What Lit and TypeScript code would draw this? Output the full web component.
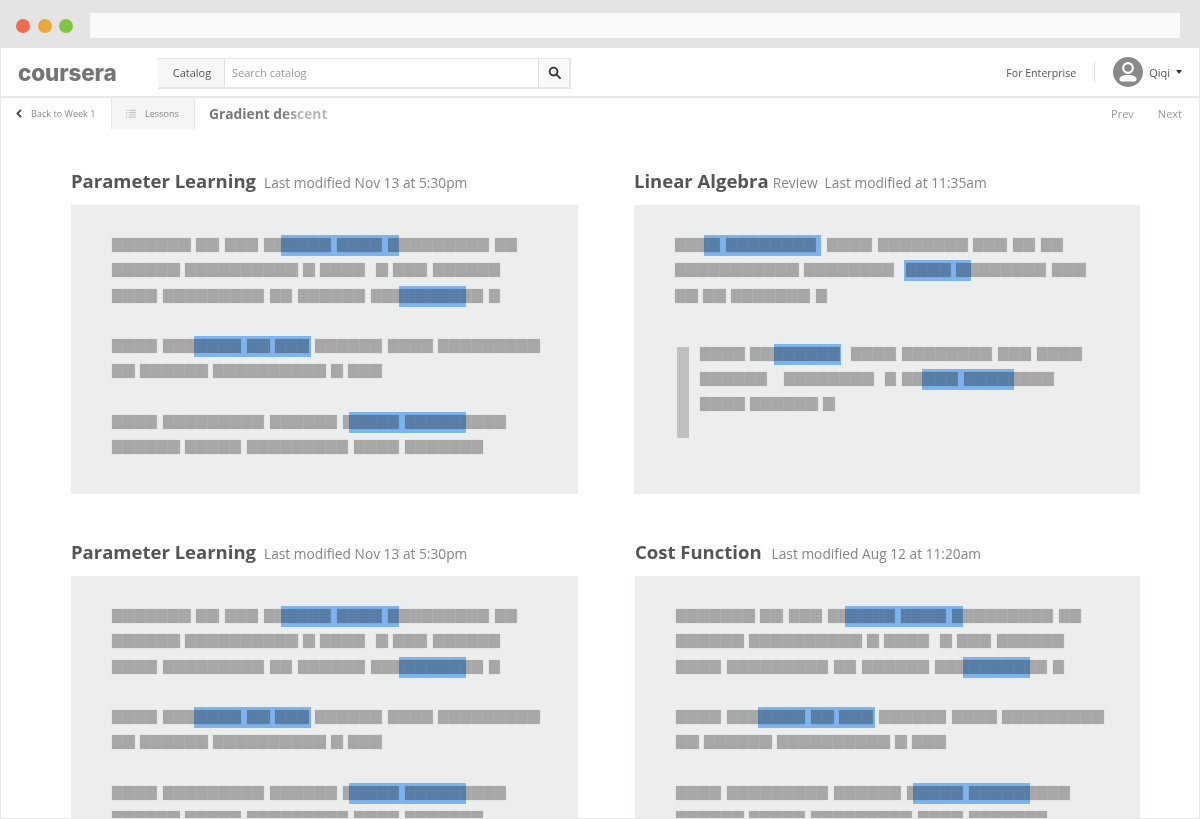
import { LitElement, html, css, svg } from "lit";
import { customElement } from "lit/decorators.js";

type Line = { w: number[]; h?: [number, number] };
const CELL = 11.25;

const para1: Line[][] = [
  [
    { w: [7, 2, 3, 6, 4, 9, 2], h: [169, 287] },
    { w: [6, 10, 1, 4, 0, 1, 3, 6] },
    { w: [4, 9, 2, 6, 10, 1], h: [287, 354] },
  ],
  [
    { w: [4, 7, 2, 3, 6, 4, 9], h: [82, 199] },
    { w: [2, 6, 10, 1, 3] },
  ],
  [
    { w: [4, 9, 6, 5, 9], h: [237, 354] },
    { w: [6, 5, 9, 4, 7] },
  ],
];

const para2: Line[][] = [
  [
    { w: [4, 8, 0, 4, 8, 3, 2, 2], h: [28.5, 146] },
    { w: [11, 8, 0, 4, 8, 3], h: [228.5, 296] },
    { w: [2, 2, 7, 1] },
  ],
];

const quote: Line[] = [
  { w: [4, 8, 0, 4, 8, 3, 4], h: [74, 141] },
  { w: [6, 0, 0, 8, 0, 1, 5, 8], h: [222, 314.5] },
  { w: [4, 6, 1] },
];

@customElement("app-root")
export class AppRoot extends LitElement {
  static styles = css`
    :host {
      display: block;
      height: 819px;
      overflow: hidden;
      font-family: "Open Sans", sans-serif;
      background: #fff;
    }
    .chrome {
      height: 48px;
      background: #e4e4e4;
      display: flex;
      align-items: center;
      padding-left: 16px;
      box-sizing: border-box;
    }
    .dots { display: flex; gap: 7.5px; margin-top: 4px; }
    .dot { width: 14px; height: 14px; border-radius: 50%; }
    .red { background: #ee6c4d; }
    .amber { background: #e8a93a; }
    .green { background: #83c441; }
    .url {
      margin-left: 17px;
      width: 1090px;
      height: 25px;
      background: #fafafa;
      margin-top: 3px;
    }
    .page {
      height: 771px;
      box-sizing: border-box;
      border: solid #e8e8e8;
      border-width: 0 1px 1px;
      overflow: hidden;
    }
    .nav {
      height: 50px;
      box-sizing: border-box;
      border-bottom: 2px solid #e8e8e8;
      display: flex;
      align-items: center;
      padding: 0 17px 0 17px;
    }
    .logo {
      flex: none;
      width: 100px;
      height: 24px;
      margin-top: 2px;
      line-height: 24px;
      white-space: nowrap;
      font-family: Inter, sans-serif;
      font-weight: 800;
      font-size: 22.5px;
      letter-spacing: -0.15px;
      color: #757575;
    }
    .search {
      margin-left: 40px;
      margin-top: 2px;
      display: flex;
      height: 31px;
      width: 413px;
      box-sizing: border-box;
      border: solid #e6e6e6;
      border-width: 1px 2px 2px 0;
      font-size: 11px;
    }
    .cat {
      width: 67px;
      background: #f7f7f7;
      color: #555;
      display: flex;
      align-items: center;
      justify-content: center;
      padding-left: 2px;
      box-sizing: border-box;
      border-right: 1px solid #e0e0e0;
    }
    .input {
      flex: 1;
      color: #999;
      display: flex;
      align-items: center;
      padding-left: 7px;
    }
    .btn {
      width: 30px;
      background: #f9f9f9;
      border-left: 1px solid #e0e0e0;
      display: flex;
      align-items: center;
      justify-content: center;
    }
    .btn svg { display: block; width: 13px; height: 13px; }
    .spacer { flex: 1; }
    .ent { font-size: 10.6px; color: #555; margin-top: 1px; }
    .div { width: 1px; height: 20px; background: #dcdcdc; margin: 0 18px; }
    .avatar { display: block; width: 30px; height: 30px; margin-right: 6px; }
    .user { font-size: 11px; color: #555; margin-top: 1px; }
    .caret {
      width: 0;
      height: 0;
      border: solid transparent;
      border-width: 4px 3.5px 0;
      border-top-color: #333;
      margin-left: 6px;
    }
    .sub {
      height: 31px;
      display: flex;
      align-items: stretch;
      font-size: 9.1px;
      color: #888;
    }
    .back {
      width: 110px;
      box-sizing: border-box;
      display: flex;
      align-items: center;
      padding-left: 15px;
      gap: 9px;
    }
    .back svg { display: block; width: 6px; height: 9px; }
    .lessons {
      width: 84px;
      box-sizing: border-box;
      background: #f5f5f5;
      border: solid #e4e4e4;
      border-width: 0 1px 0 1px;
      display: flex;
      align-items: center;
      padding-left: 14px;
      gap: 9px;
    }
    .lessons svg { display: block; width: 10px; height: 10px; }
    .heading {
      margin-left: 14px;
      align-self: center;
      font-size: 13.8px;
      font-weight: 700;
      background: linear-gradient(90deg, #777 0 62%, #b8b8b8 78%);
      -webkit-background-clip: text;
      background-clip: text;
      color: transparent;
    }
    .pager {
      margin-left: auto;
      display: flex;
      gap: 24px;
      align-items: center;
      font-size: 11px;
      color: #999;
      padding-right: 17px;
    }
    .main {
      padding: 39px 0 0 70px;
      display: grid;
      grid-template-columns: 506.5px 506px;
      column-gap: 56.5px;
      row-gap: 45px;
    }
    .title {
      height: 26px;
      margin-bottom: 11px;
      display: flex;
      align-items: baseline;
      white-space: nowrap;
      line-height: 26px;
    }
    h2 {
      margin: 0 8px 0 0;
      font-size: 18.5px;
      font-weight: 700;
      color: #555;
    }
    .wide h2 { margin-right: 10px; }
    .tagged h2 { margin-right: 4px; }
    .tag, .meta { font-size: 13.75px; color: #858585; }
    .tag { margin-right: 7px; }
    .card {
      height: 289px;
      background: #eceeed;
      box-sizing: border-box;
      padding: 27.5px 0 0 41px;
    }
    .shift { margin-left: 1px; }
    .para + .para { margin-top: 25.25px; }
    .line {
      position: relative;
      height: 25.25px;
      display: flex;
      align-items: center;
      gap: 5.625px;
    }
    .word {
      height: 14px;
      background: repeating-linear-gradient(90deg, #a6a7a6 0 10.25px, #aeafae 10.25px 11.25px);
      box-shadow: 0 0 1px #bfc0bf;
    }
    .mark {
      position: absolute;
      top: 2.5px;
      height: 21px;
      background: #88c0ff;
      mix-blend-mode: multiply;
    }
    .quote { display: flex; margin-top: 33px; }
    .bar {
      width: 12px;
      height: 91px;
      margin: 6px 11px 0 1.5px;
      background: #c0c0c0;
      flex: none;
    }
  `;

  private line(l: Line) {
    return html`<div class="line">
      ${l.w.map((n) => html`<span class="word" style="width:${n * CELL}px"></span>`)}
      ${l.h
        ? html`<span class="mark" style="left:${l.h[0]}px;width:${l.h[1] - l.h[0]}px"></span>`
        : ""}
    </div>`;
  }

  private paras(ps: Line[][]) {
    return ps.map((p) => html`<div class="para">${p.map((l) => this.line(l))}</div>`);
  }

  private section(
    title: string,
    meta: string,
    body: unknown,
    tag = "",
    shift = false
  ) {
    return html`<section class="${shift ? "shift wide" : ""} ${tag ? "tagged" : ""}">
      <div class="title">
        <h2>${title}</h2>
        ${tag ? html`<span class="tag">${tag}</span>` : ""}
        <span class="meta">${meta}</span>
      </div>
      <div class="card">${body}</div>
    </section>`;
  }

  render() {
    const body1 = this.paras(para1);
    const body2 = html`${this.paras(para2)}
      <div class="quote">
        <div class="bar"></div>
        <div>${quote.map((l) => this.line(l))}</div>
      </div>`;
    return html`
      <div class="chrome">
        <div class="dots">
          <span class="dot red"></span><span class="dot amber"></span><span class="dot green"></span>
        </div>
        <div class="url"></div>
      </div>
      <div class="page">
        <div class="nav">
          <div class="logo">coursera</div>
          <div class="search">
            <div class="cat">Catalog</div>
            <div class="input">Search catalog</div>
            <div class="btn">
              <svg viewBox="0 0 14 14" fill="none" stroke="#333" stroke-width="2">
                <circle cx="6" cy="6" r="4.2"></circle>
                <path d="M9 9l4 4" stroke-linecap="round"></path>
              </svg>
            </div>
          </div>
          <div class="spacer"></div>
          <div class="ent">For Enterprise</div>
          <div class="div"></div>
          <svg class="avatar" viewBox="0 0 30 30">
            <circle cx="15" cy="15" r="15" fill="#8a8a8a"></circle>
            <circle cx="15" cy="11" r="4.8" fill="none" stroke="#fff" stroke-width="2.2"></circle>
            <path d="M6.5 22c0-2.500 3.500-4 8.500-4s8.500 1.500 8.500 4v.5a2 2 0 0 1-2 2h-13a2 2 0 0 1-2-2z" fill="#fff"></path>
          </svg>
          <div class="user">Qiqi</div>
          <div class="caret"></div>
        </div>
        <div class="sub">
          <div class="back">
            <svg viewBox="0 0 6 9" fill="none" stroke="#444" stroke-width="1.8">
              <path d="M5 .8L1.400 4.500 5 8.200"></path>
            </svg>
            <span>Back to Week 1</span>
          </div>
          <div class="lessons">
            <svg viewBox="0 0 11 11" fill="none" stroke="#bbb" stroke-width="1">
              ${[1.5, 4, 6.5, 9].map(
                (y) => svg`<path d="M0 ${y}h1.500M3 ${y}h8"></path>`
              )}
            </svg>
            <span>Lessons</span>
          </div>
          <div class="heading">Gradient descent</div>
          <div class="pager"><span>Prev</span><span>Next</span></div>
        </div>
        <div class="main">
          ${this.section("Parameter Learning", "Last modified Nov 13 at 5:30pm", body1)}
          ${this.section("Linear Algebra", "Last modified at 11:35am", body2, "Review")}
          ${this.section("Parameter Learning", "Last modified Nov 13 at 5:30pm", body1)}
          ${this.section("Cost Function", "Last modified Aug 12 at 11:20am", body1, "", true)}
        </div>
      </div>
    `;
  }
}
